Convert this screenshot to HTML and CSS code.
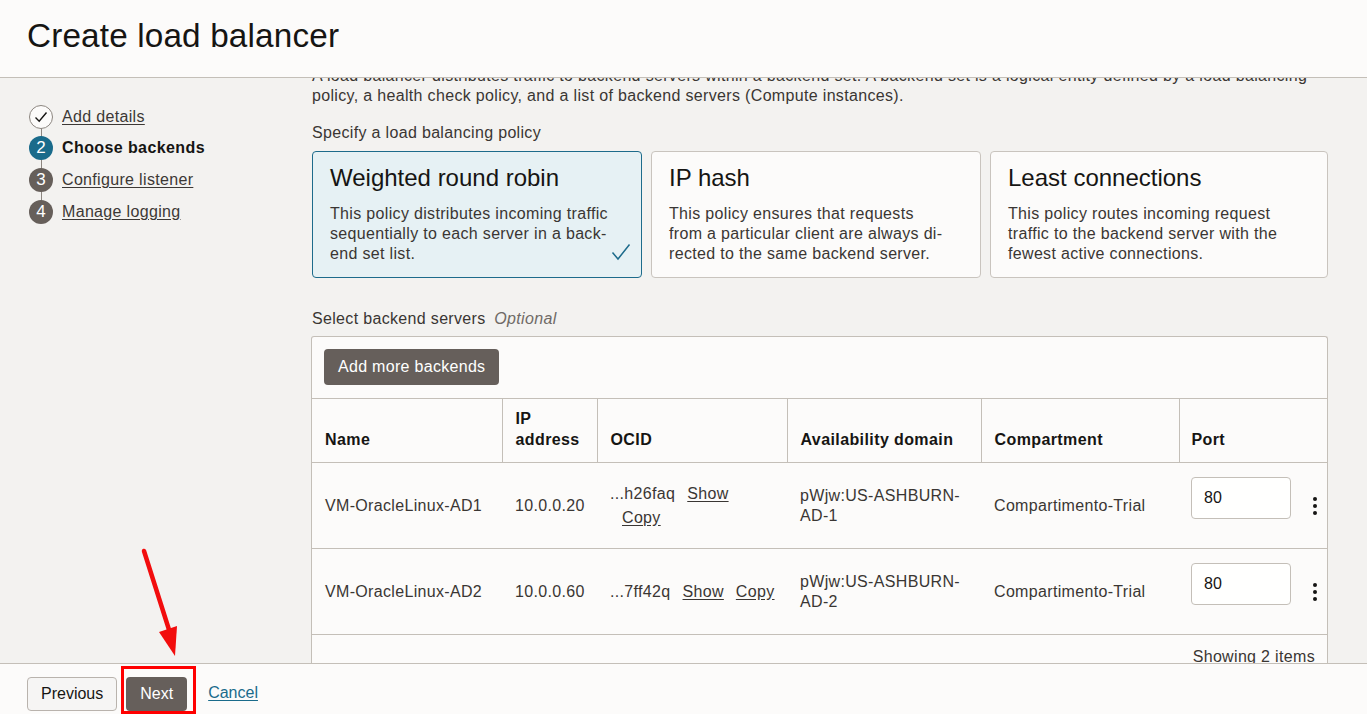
FILE: index.html
```html
<!DOCTYPE html>
<html lang="en">
<head>
<meta charset="utf-8">
<title>Create load balancer</title>
<link rel="stylesheet" href="styles.css">
</head>
<body>
<div class="page">
  <header class="header">
    <h1 class="title">Create load balancer</h1>
  </header>

  <div class="middle">
    <nav class="steps">
      <div class="step">
        <span class="dot dot-done">
          <svg width="16" height="16" viewBox="0 0 16 16"><path d="M2.5 8.5 L6.2 12.2 L13.5 3.5" fill="none" stroke="#161513" stroke-width="1.4"/></svg>
        </span>
        <a class="step-link" href="#">Add details</a>
      </div>
      <div class="step">
        <span class="dot dot-current">2</span>
        <span class="step-current">Choose backends</span>
      </div>
      <div class="step">
        <span class="dot dot-todo">3</span>
        <a class="step-link" href="#">Configure listener</a>
      </div>
      <div class="step step-last">
        <span class="dot dot-todo">4</span>
        <a class="step-link" href="#">Manage logging</a>
      </div>
    </nav>

    <main class="main">
      <p class="intro">A load balancer distributes traffic to backend servers within a backend set. A backend set is a logical entity defined by a load balancing<br>policy, a health check policy, and a list of backend servers (Compute instances).</p>

      <div class="label">Specify a load balancing policy</div>
      <div class="cards">
        <div class="card card-selected">
          <div class="card-title">Weighted round robin</div>
          <div class="card-desc">This policy distributes incoming traffic<br>sequentially to each server in a back-<br>end set list.</div>
          <svg class="card-check" width="20" height="18" viewBox="0 0 20 18"><path d="M1.5 9.5 L7 16 L18.5 1.5" fill="none" stroke="#1d6b8b" stroke-width="1.5"/></svg>
        </div>
        <div class="card">
          <div class="card-title">IP hash</div>
          <div class="card-desc">This policy ensures that requests<br>from a particular client are always di-<br>rected to the same backend server.</div>
        </div>
        <div class="card">
          <div class="card-title">Least connections</div>
          <div class="card-desc">This policy routes incoming request<br>traffic to the backend server with the<br>fewest active connections.</div>
        </div>
      </div>

      <div class="label label-servers">Select backend servers <em class="optional">Optional</em></div>
      <div class="panel">
        <div class="toolbar">
          <button class="btn btn-dark">Add more backends</button>
        </div>
        <table class="grid">
          <colgroup>
            <col class="c-name"><col class="c-ip"><col class="c-ocid"><col class="c-ad"><col class="c-comp"><col class="c-port">
          </colgroup>
          <thead>
            <tr>
              <th>Name</th>
              <th>IP<br>address</th>
              <th>OCID</th>
              <th>Availability domain</th>
              <th>Compartment</th>
              <th class="th-port">Port</th>
            </tr>
          </thead>
          <tbody>
            <tr>
              <td>VM-OracleLinux-AD1</td>
              <td>10.0.0.20</td>
              <td class="ocid">...h26faq<a class="mini-link" href="#">Show</a><br><a class="mini-link" href="#">Copy</a></td>
              <td>pWjw:US-ASHBURN-<br>AD-1</td>
              <td>Compartimento-Trial</td>
              <td class="td-port"><div class="port-cell"><input class="port" type="text" value="80"><span class="kebab"><i></i><i></i><i></i></span></div></td>
            </tr>
            <tr>
              <td>VM-OracleLinux-AD2</td>
              <td>10.0.0.60</td>
              <td class="ocid">...7ff42q<a class="mini-link" href="#">Show</a><a class="mini-link" href="#">Copy</a></td>
              <td>pWjw:US-ASHBURN-<br>AD-2</td>
              <td>Compartimento-Trial</td>
              <td class="td-port"><div class="port-cell"><input class="port" type="text" value="80"><span class="kebab"><i></i><i></i><i></i></span></div></td>
            </tr>
            <tr class="foot-row">
              <td colspan="6">Showing 2 items</td>
            </tr>
          </tbody>
        </table>
      </div>
    </main>
  </div>

  <footer class="footer">
    <button class="btn btn-light btn-foot">Previous</button>
    <button class="btn btn-dark btn-foot btn-next">Next</button>
    <a class="cancel" href="#">Cancel</a>
  </footer>

  <div class="highlight"></div>
  <svg class="arrow" width="60" height="120" viewBox="0 0 60 120">
    <line x1="3" y1="3" x2="30" y2="88" stroke="#f20d0d" stroke-width="4.5" stroke-linecap="round"/>
    <polygon points="18,84 36,78 34,108" fill="#f20d0d"/>
  </svg>
</div>
</body>
</html>
```

FILE: styles.css
```css
* { box-sizing: border-box; }

html, body {
  margin: 0;
  padding: 0;
  height: 714px;
  overflow: hidden;
}

body {
  font-family: "Liberation Sans", Arial, sans-serif;
  color: #161513;
  background: #f3f2f0;
  letter-spacing: 0.33px;
}

.page {
  position: relative;
  display: flex;
  flex-direction: column;
  height: 714px;
}

/* Header */
.header {
  height: 78px;
  flex: none;
  background: #fcfbfa;
  border-bottom: 1px solid #c4bfb8;
  padding-left: 27px;
  display: flex;
  align-items: center;
  position: relative;
  z-index: 2;
}

.title {
  margin: 0 0 6px 0;
  font-weight: normal;
  font-size: 33.3px;
  letter-spacing: 0.15px;
  color: #161513;
}

/* Middle */
.middle {
  flex: 1;
  display: flex;
  overflow: hidden;
  min-height: 0;
}

.steps {
  width: 312px;
  flex: none;
  padding: 23px 0 0 29px;
}

.step {
  position: relative;
  display: flex;
  align-items: center;
  height: 32px;
}

.step:first-child { height: 31px; }

.step::after {
  content: "";
  position: absolute;
  left: 11.5px;
  top: 26px;
  height: 14px;
  width: 1px;
  background: #8c8680;
}

.step-last::after { display: none; }

.dot {
  width: 24px;
  height: 24px;
  border-radius: 50%;
  display: inline-flex;
  align-items: center;
  justify-content: center;
  flex: none;
  font-size: 17px;
  letter-spacing: 0;
  color: #ffffff;
  margin-right: 9px;
  position: relative;
  z-index: 1;
}

.dot-done {
  background: #fcfbfa;
  border: 1px solid #8c8680;
}

.dot-current { background: #1a6b8b; }
.dot-todo { background: #665f5a; }

.step-link {
  color: #3c3835;
  text-decoration: underline;
  text-underline-offset: 2px;
  font-size: 16px;
}

.step-current {
  font-weight: bold;
  font-size: 16px;
  letter-spacing: 0.4px;
  color: #161513;
}

/* Main */
.main {
  flex: 1;
  min-width: 0;
  padding-right: 39px;
}

.intro {
  margin: -12px 0 0 0;
  font-size: 16px;
  line-height: 20px;
  color: #3a3633;
  white-space: nowrap;
}

.label {
  margin-top: 17px;
  font-size: 16px;
  line-height: 20px;
  color: #3a3633;
}

.optional {
  color: #6f6a66;
  margin-left: 4px;
}

.cards {
  margin-top: 8px;
  display: grid;
  grid-template-columns: 330px 330px 1fr;
  column-gap: 9px;
}

.card {
  position: relative;
  height: 127px;
  background: #fcfbfa;
  border: 1px solid #c9c4be;
  border-radius: 4px;
  padding: 11px 17px 0 17px;
}

.card-selected {
  background: #e6f1f4;
  border-color: #1d6b8b;
}

.card-title {
  font-size: 24px;
  line-height: 30px;
  letter-spacing: 0;
  color: #161513;
}

.card-desc {
  margin-top: 11px;
  font-size: 16px;
  line-height: 20px;
  color: #3a3633;
}

.card-check {
  position: absolute;
  right: 10px;
  bottom: 16px;
}

.label-servers { margin-top: 31px; }

/* Panel / table */
.panel {
  margin-top: 7px;
  margin-left: -1px;
  background: #fcfbfa;
  border: 1px solid #c4bfb8;
  border-bottom: none;
  border-radius: 3px 3px 0 0;
}

.toolbar {
  padding: 12px 12px 13px 12px;
}

.btn {
  font-family: "Liberation Sans", Arial, sans-serif;
  font-size: 16px;
  letter-spacing: 0.3px;
  height: 36px;
  padding: 0 13px;
  border-radius: 4px;
  border: 1px solid transparent;
  cursor: pointer;
}

.btn-dark {
  background: #665f5b;
  color: #ffffff;
}

.btn-light {
  background: #f6f5f4;
  border-color: #b9b3ad;
  color: #161513;
}

.grid {
  width: 100%;
  border-collapse: collapse;
  table-layout: fixed;
  font-size: 16px;
  color: #3a3633;
}

.c-name { width: 190px; }
.c-ip { width: 95px; }
.c-ocid { width: 190px; }
.c-ad { width: 194px; }
.c-comp { width: 198px; }
.c-port { width: auto; }

.grid th {
  text-align: left;
  vertical-align: bottom;
  font-weight: bold;
  letter-spacing: 0.4px;
  color: #161513;
  line-height: 21px;
  height: 64px;
  padding: 0 12px 12px 13px;
  border-top: 1px solid #c4bfb8;
  border-bottom: 1px solid #c4bfb8;
  border-left: 1px solid #c4bfb8;
}

.grid th:first-child { border-left: none; }
.grid th.th-port { padding-left: 12px; }

.grid td {
  height: 86px;
  padding: 0 12px 0 13px;
  line-height: 20px;
  vertical-align: middle;
  border-bottom: 1px solid #c4bfb8;
}

.grid td.td-port { padding-left: 12px; }

.grid td.ocid {
  line-height: 24px;
  white-space: nowrap;
  overflow: visible;
}

.mini-link {
  display: inline-block;
  margin-left: 12px;
  color: #3a3633;
  text-decoration: underline;
  text-underline-offset: 2px;
}

.port-cell {
  display: flex;
  align-items: center;
}

.port {
  width: 100px;
  height: 42px;
  margin-bottom: 16px;
  border: 1px solid #c4bfb8;
  border-radius: 4px;
  background: #fffffe;
  font-family: "Liberation Sans", Arial, sans-serif;
  font-size: 16px;
  color: #161513;
  padding: 0 12px;
}

.kebab {
  margin-left: 22px;
  display: flex;
  flex-direction: column;
  gap: 3px;
}

.kebab i {
  width: 4px;
  height: 4px;
  border-radius: 50%;
  background: #161513;
  display: block;
}

.grid .foot-row td {
  height: 60px;
  text-align: right;
  vertical-align: top;
  padding-top: 12px;
  border-bottom: none;
}

/* Footer */
.footer {
  height: 51px;
  flex: none;
  background: #fcfbfa;
  border-top: 1px solid #c4bfb8;
  display: flex;
  align-items: flex-start;
  padding: 13px 0 0 27px;
  position: relative;
  z-index: 2;
}

.btn-foot {
  height: 34px;
  letter-spacing: 0;
}

.btn-next {
  margin-left: 9px;
  padding: 0 13px;
  font-weight: normal;
}

.cancel {
  margin-left: 21px;
  margin-top: 7px;
  font-size: 16px;
  letter-spacing: 0;
  color: #1a6b8b;
  text-decoration: underline;
  text-underline-offset: 2px;
}

/* Annotation overlays */
.highlight {
  position: absolute;
  left: 121px;
  top: 666px;
  width: 75px;
  height: 48px;
  border: 3px solid #ff0000;
  z-index: 5;
}

.arrow {
  position: absolute;
  left: 141px;
  top: 548px;
  z-index: 5;
  overflow: visible;
}
```
